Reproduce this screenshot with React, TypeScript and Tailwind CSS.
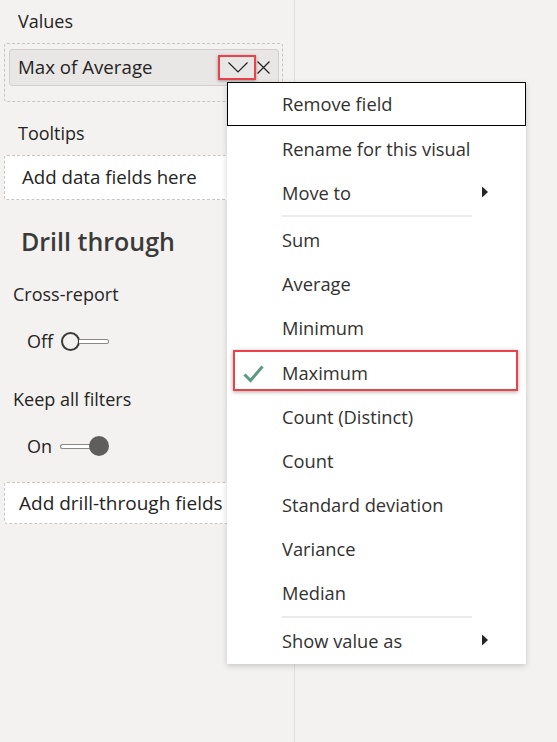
import React from "react";

const font = { fontFamily: '"Open Sans", "Noto Sans", sans-serif' };

function MenuRow({ label, arrow, boxed }: { label: string; arrow?: boolean; boxed?: boolean }) {
  return (
    <div
      className={
        "relative flex h-[44.2px] items-center pl-[55px] text-[18.3px] text-[#323130] " +
        (boxed ? "border border-black" : "")
      }
    >
      <span className={boxed ? "-ml-px" : ""}>{label}</span>
      {arrow && (
        <svg className="absolute left-[255px] top-1/2 -translate-y-1/2" width="6" height="11" viewBox="0 0 6 11">
          <path d="M0 0 L6 5.5 L0 11 Z" fill="#252423" />
        </svg>
      )}
    </div>
  );
}

function Sep() {
  return (
    <div className="flex h-[3px] items-center pl-[55px]">
      <div className="h-[2px] w-[190px] bg-[#edebe9]" />
    </div>
  );
}

export default function App() {
  return (
    <div className="relative h-[742px] w-[557px] overflow-hidden bg-[#f3f2f1]" style={font}>
      <div className="flex h-full w-[295px] flex-col border-r border-[#e1dfdd] pl-[4px] text-[#252423]">
        <div className="flex h-[43px] items-center pl-[14px] text-[18px]">Values</div>
        <div className="h-[59px] w-[279px] rounded-[3px] border border-dashed border-[#c8c6c4] pl-[4px] pt-[5px]">
          <div className="flex h-[37px] w-[270px] items-center rounded-[3px] border border-[#d2d0ce] bg-[#e8e7e6] pl-[8px] pr-[8px] text-[18.7px]">
            <span>Max of Average</span>
            <svg className="ml-auto" width="20" height="11" viewBox="0 0 20 11">
              <path d="M0.5 0.5 L10 10 L19.5 0.5" fill="none" stroke="#252423" strokeWidth="1.2" />
            </svg>
            <svg className="ml-[9px]" width="13" height="13" viewBox="0 0 13 13">
              <path d="M0.5 0.5 L12.5 12.5 M12.5 0.5 L0.5 12.5" fill="none" stroke="#252423" strokeWidth="1.3" />
            </svg>
          </div>
        </div>
        <div className="h-[53px] pl-[14px] pt-[19px] text-[18px] leading-[24px]">Tooltips</div>
        <div className="flex h-[45px] w-[279px] items-center rounded-[3px] border border-dashed border-[#c8c6c4] bg-white pl-[17px] text-[18.7px]">
          Add data fields here
        </div>
        <div className="mt-[25px] pl-[17px] text-[25px] font-semibold leading-[32px] text-[#3b3a39]">Drill through</div>
        <div className="mt-[25px] pl-[9px] text-[18px] leading-[24px]">Cross-report</div>
        <div className="mt-[23px] flex h-[24px] items-center pl-[23px] text-[18px]">
          <span>Off</span>
          <div className="ml-[8px] flex items-center">
            <div className="h-[19px] w-[19px] rounded-full border-2 border-[#3b3a39] bg-[#f3f2f1]" />
            <div className="-ml-px h-[5px] w-[30px] rounded-r-full border border-l-0 border-[#8a8886] bg-white" />
          </div>
        </div>
        <div className="mt-[34px] pl-[9px] text-[18px] leading-[24px]">Keep all filters</div>
        <div className="mt-[23px] flex h-[24px] items-center pl-[23px] text-[18px]">
          <span>On</span>
          <div className="ml-[8px] flex items-center">
            <div className="-mr-px h-[5px] w-[30px] rounded-l-full border border-r-0 border-[#8a8886] bg-white" />
            <div className="h-[20px] w-[20px] rounded-full bg-[#605e5c]" />
          </div>
        </div>
        <div className="mt-[24px] flex h-[42px] w-[279px] items-center rounded-[3px] border border-dashed border-[#c8c6c4] bg-white pl-[14px] text-[19px] whitespace-nowrap">
          Add drill-through fields here
        </div>
      </div>

      {/* chevron highlight */}
      <div className="absolute left-[218px] top-[55px] h-[25px] w-[38px] border-2 border-[#e9424a] shadow-[0_1px_3px_rgba(0,0,0,0.35)]" />

      {/* context menu */}
      <div className="absolute left-[227px] top-[82px] w-[299px] bg-white shadow-[0_2px_6px_rgba(0,0,0,0.18)]">
        <MenuRow label="Remove field" boxed />
        <MenuRow label="Rename for this visual" />
        <MenuRow label="Move to" arrow />
        <Sep />
        <MenuRow label="Sum" />
        <MenuRow label="Average" />
        <MenuRow label="Minimum" />
        <MenuRow label="Maximum" />
        <MenuRow label="Count (Distinct)" />
        <MenuRow label="Count" />
        <MenuRow label="Standard deviation" />
        <MenuRow label="Variance" />
        <MenuRow label="Median" />
        <Sep />
        <MenuRow label="Show value as" arrow />
        <div className="h-[2px]" />

        <div className="absolute left-[6px] top-[268px] h-[41px] w-[285px] border-2 border-[#e9424a] shadow-[0_1px_4px_rgba(0,0,0,0.35)]" />
        <svg className="absolute left-[16px] top-[283px]" width="21" height="18" viewBox="0 0 21 18">
          <path d="M1.5 9.5 L7.5 15.5 L19.5 1.5" fill="none" stroke="#5b9a84" strokeWidth="3" />
        </svg>
      </div>
    </div>
  );
}
